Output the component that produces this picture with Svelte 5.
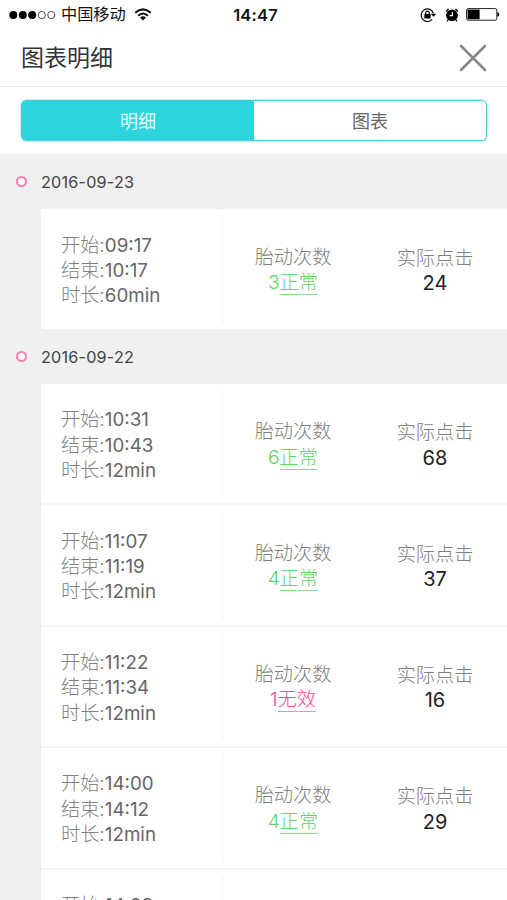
<script lang="ts">
  type Item = {
    start: string;
    end: string;
    duration: string;
    count: number;
    valid: boolean;
    clicks: number;
  };

  type Day = {
    date: string;
    items: Item[];
  };

  let days: Day[] = [
    {
      date: '2016-09-23',
      items: [
        { start: '09:17', end: '10:17', duration: '60min', count: 3, valid: true, clicks: 24 },
      ],
    },
    {
      date: '2016-09-22',
      items: [
        { start: '10:31', end: '10:43', duration: '12min', count: 6, valid: true, clicks: 68 },
        { start: '11:07', end: '11:19', duration: '12min', count: 4, valid: true, clicks: 37 },
        { start: '11:22', end: '11:34', duration: '12min', count: 1, valid: false, clicks: 16 },
        { start: '14:00', end: '14:12', duration: '12min', count: 4, valid: true, clicks: 29 },
        { start: '14:28', end: '14:40', duration: '12min', count: 4, valid: true, clicks: 31 },
      ],
    },
  ];

  let activeTab = 'detail';
</script>

<main class="screen">
  <div class="status-bar">
    <div class="status-left">
      <svg class="signal" width="47" height="10" viewBox="0 0 47 10">
        <circle cx="4.3" cy="5" r="4" />
        <circle cx="13.8" cy="5" r="4" />
        <circle cx="23.2" cy="5" r="4" />
        <circle class="empty" cx="32.8" cy="5" r="3.6" />
        <circle class="empty" cx="42.3" cy="5" r="3.6" />
      </svg>
      <span class="carrier">中国移动</span>
      <svg class="wifi" width="18" height="13" viewBox="0 0 18 13">
        <path d="M1.2 4.8 Q9 -2 16.8 4.8" />
        <path d="M4.1 7.7 Q9 3.3 13.9 7.7" />
        <path class="fill" d="M6 9.6 Q9 7 12 9.6 L9 12.6Z" />
      </svg>
    </div>
    <span class="clock">14:47</span>
    <div class="status-right">
      <svg class="lock" width="17" height="16" viewBox="0 0 17 16">
        <path class="ring" d="M12.2 12.4 A6.3 6.3 0 1 1 13.4 6.2" />
        <path d="M10.8 6.8 L16.2 6.8 L13.5 9.8Z" />
        <rect x="4.4" y="6.9" width="6.2" height="4.6" />
        <path class="ring" d="M5.7 7.4 V6 A1.8 1.8 0 0 1 9.3 6 V7.4" />
      </svg>
      <svg class="alarm" width="14" height="14" viewBox="0 0 14 14">
        <circle cx="7" cy="7.3" r="5.9" />
        <path class="bell" d="M1 3.2 L3.6 1.1 M13 3.2 L10.4 1.1 M3 12 L2 13.2 M11 12 L12 13.2" />
        <path class="hand" d="M7.4 4 V7.6 H4.6" />
      </svg>
      <svg class="battery" width="34" height="13" viewBox="0 0 34 13">
        <rect class="shell" x="0.6" y="0.6" width="30.2" height="11.6" rx="1.6" />
        <rect x="1.6" y="1.6" width="12" height="9.6" />
        <path d="M31.4 4 Q33.4 4.6 33.4 6.4 Q33.4 8.2 31.4 8.8Z" />
      </svg>
    </div>
  </div>

  <header class="header">
    <h1>图表明细</h1>
    <button class="close" aria-label="关闭">
      <svg width="28" height="28" viewBox="0 0 28 28">
        <path d="M2 2 L26 26 M26 2 L2 26" />
      </svg>
    </button>
  </header>

  <div class="tabs-wrap">
    <div class="tabs">
      <button class:active={activeTab === 'detail'} on:click={() => (activeTab = 'detail')}>明细</button>
      <button class:active={activeTab === 'chart'} on:click={() => (activeTab = 'chart')}>图表</button>
    </div>
  </div>

  <section class="timeline">
    {#each days as day}
      <div class="day-title">
        <span class="dot"></span>
        <h2>{day.date}</h2>
      </div>
      <div class="card">
        {#each day.items as item}
          <div class="row">
            <div class="times">
              <p>开始:<b>{item.start}</b></p>
              <p>结束:<b>{item.end}</b></p>
              <p>时长:<b>{item.duration}</b></p>
            </div>
            <div class="stat">
              <p>胎动次数</p>
              <p class="result" class:invalid={!item.valid}>{item.count}<span>{item.valid ? '正常' : '无效'}</span></p>
            </div>
            <div class="stat clicks">
              <p>实际点击</p>
              <p class="number">{item.clicks}</p>
            </div>
          </div>
        {/each}
      </div>
    {/each}
  </section>
</main>

<style>
  :global(body) {
    margin: 0;
    overflow: hidden;
  }

  .screen {
    height: 900px;
    overflow: hidden;
    display: flex;
    flex-direction: column;
    background: #fff;
    color: #333;
    font-family: Inter, "Noto Sans CJK SC", sans-serif;
  }

  p,
  h1,
  h2 {
    margin: 0;
    font-weight: 400;
  }

  button {
    border: none;
    background: none;
    padding: 0;
    font-family: inherit;
  }

  svg {
    display: block;
  }

  .status-bar {
    flex: none;
    height: 29px;
    display: grid;
    grid-template-columns: 1fr auto 1fr;
    align-items: center;
    padding: 0 7px 0 9px;
    color: #111;
  }

  .status-left,
  .status-right {
    display: flex;
    align-items: center;
  }

  .status-right {
    justify-content: flex-end;
  }

  .signal .empty {
    fill: none;
    stroke: #222;
    stroke-width: 0.8;
  }

  .carrier {
    margin-left: 5px;
    font-size: 16.2px;
    line-height: 29px;
  }

  .wifi {
    margin-left: 8px;
  }

  .wifi path {
    fill: none;
    stroke: #111;
    stroke-width: 2;
  }

  .wifi .fill {
    fill: #111;
    stroke: none;
  }

  .clock {
    padding-left: 2px;
    font-size: 16.5px;
    font-weight: 600;
    letter-spacing: 0.2px;
  }

  .lock .ring {
    fill: none;
    stroke: #111;
    stroke-width: 1.2;
  }

  .alarm {
    margin-left: 8px;
  }

  .alarm .bell {
    stroke: #111;
    stroke-width: 1.4;
  }

  .alarm .hand {
    fill: none;
    stroke: #fff;
    stroke-width: 1.2;
  }

  .battery {
    margin-left: 7px;
  }

  .battery .shell {
    fill: none;
    stroke: #222;
    stroke-width: 1;
  }

  .header {
    flex: none;
    height: 57px;
    display: flex;
    align-items: center;
    justify-content: space-between;
    padding: 0 20px 0 21px;
    border-bottom: 1px solid #e6e6e6;
  }

  .header h1 {
    padding-top: 2px;
    font-size: 23px;
    line-height: 55px;
  }

  .close path {
    fill: none;
    stroke: #888;
    stroke-width: 2.6;
    stroke-linecap: round;
  }

  .tabs-wrap {
    flex: none;
    padding: 13px 20px 13px 21px;
  }

  .tabs {
    height: 41px;
    box-sizing: border-box;
    display: flex;
    border: 1.5px solid #44cfd9;
    border-radius: 5px;
    overflow: hidden;
    box-shadow: 0 0 0 0.5px #8fe3e8;
  }

  .tabs button {
    flex: 1 1 0;
    padding-bottom: 2px;
    font-size: 18px;
    color: #666;
  }

  .tabs .active {
    background: #2ed4dc;
    color: #e8fbfc;
  }

  .timeline {
    flex: 1;
    min-height: 0;
    background: linear-gradient(to right, #f0f0f0 21px, #eee 21px, #eee 22px, #f0f0f0 22px);
  }

  .day-title {
    height: 55px;
    display: flex;
    align-items: center;
    padding-left: 16px;
  }

  .dot {
    width: 7px;
    height: 7px;
    border: 2px solid #f77fa9;
    border-radius: 50%;
    background: #fff;
  }

  .day-title h2 {
    margin-left: 14px;
    font-size: 16.2px;
    letter-spacing: 0.2px;
    color: #444;
  }

  .card {
    margin-left: 41px;
    background: #fff;
    border-radius: 3px 0 0 3px;
  }

  .row {
    height: 119.4px;
    display: grid;
    grid-template-columns: 182px 140px 1fr;
    align-items: center;
    border-bottom: 2px solid #f5f5f5;
  }

  .row:last-child {
    height: 120px;
    border-bottom: none;
  }

  .times {
    height: 108px;
    box-sizing: border-box;
    padding: 17.6px 0 0 20px;
    border-right: 1px solid #f2f2f2;
  }

  .times p,
  .stat p {
    font-size: 19.2px;
    line-height: 25.4px;
    font-weight: 300;
    color: #808080;
    white-space: nowrap;
  }

  .times b {
    font-size: 18.8px;
    font-weight: 400;
    color: #666;
  }

  .stat {
    padding-top: 2px;
    text-align: center;
  }

  .clicks {
    padding-top: 4px;
  }

  .stat .result {
    color: #5fd565;
  }

  .result span {
    border-bottom: 1px solid #8be08e;
  }

  .stat .invalid {
    color: #f7428f;
  }

  .invalid span {
    border-color: #f98abb;
  }

  .stat .number {
    font-size: 20px;
    font-weight: 400;
    color: #222;
  }
</style>
